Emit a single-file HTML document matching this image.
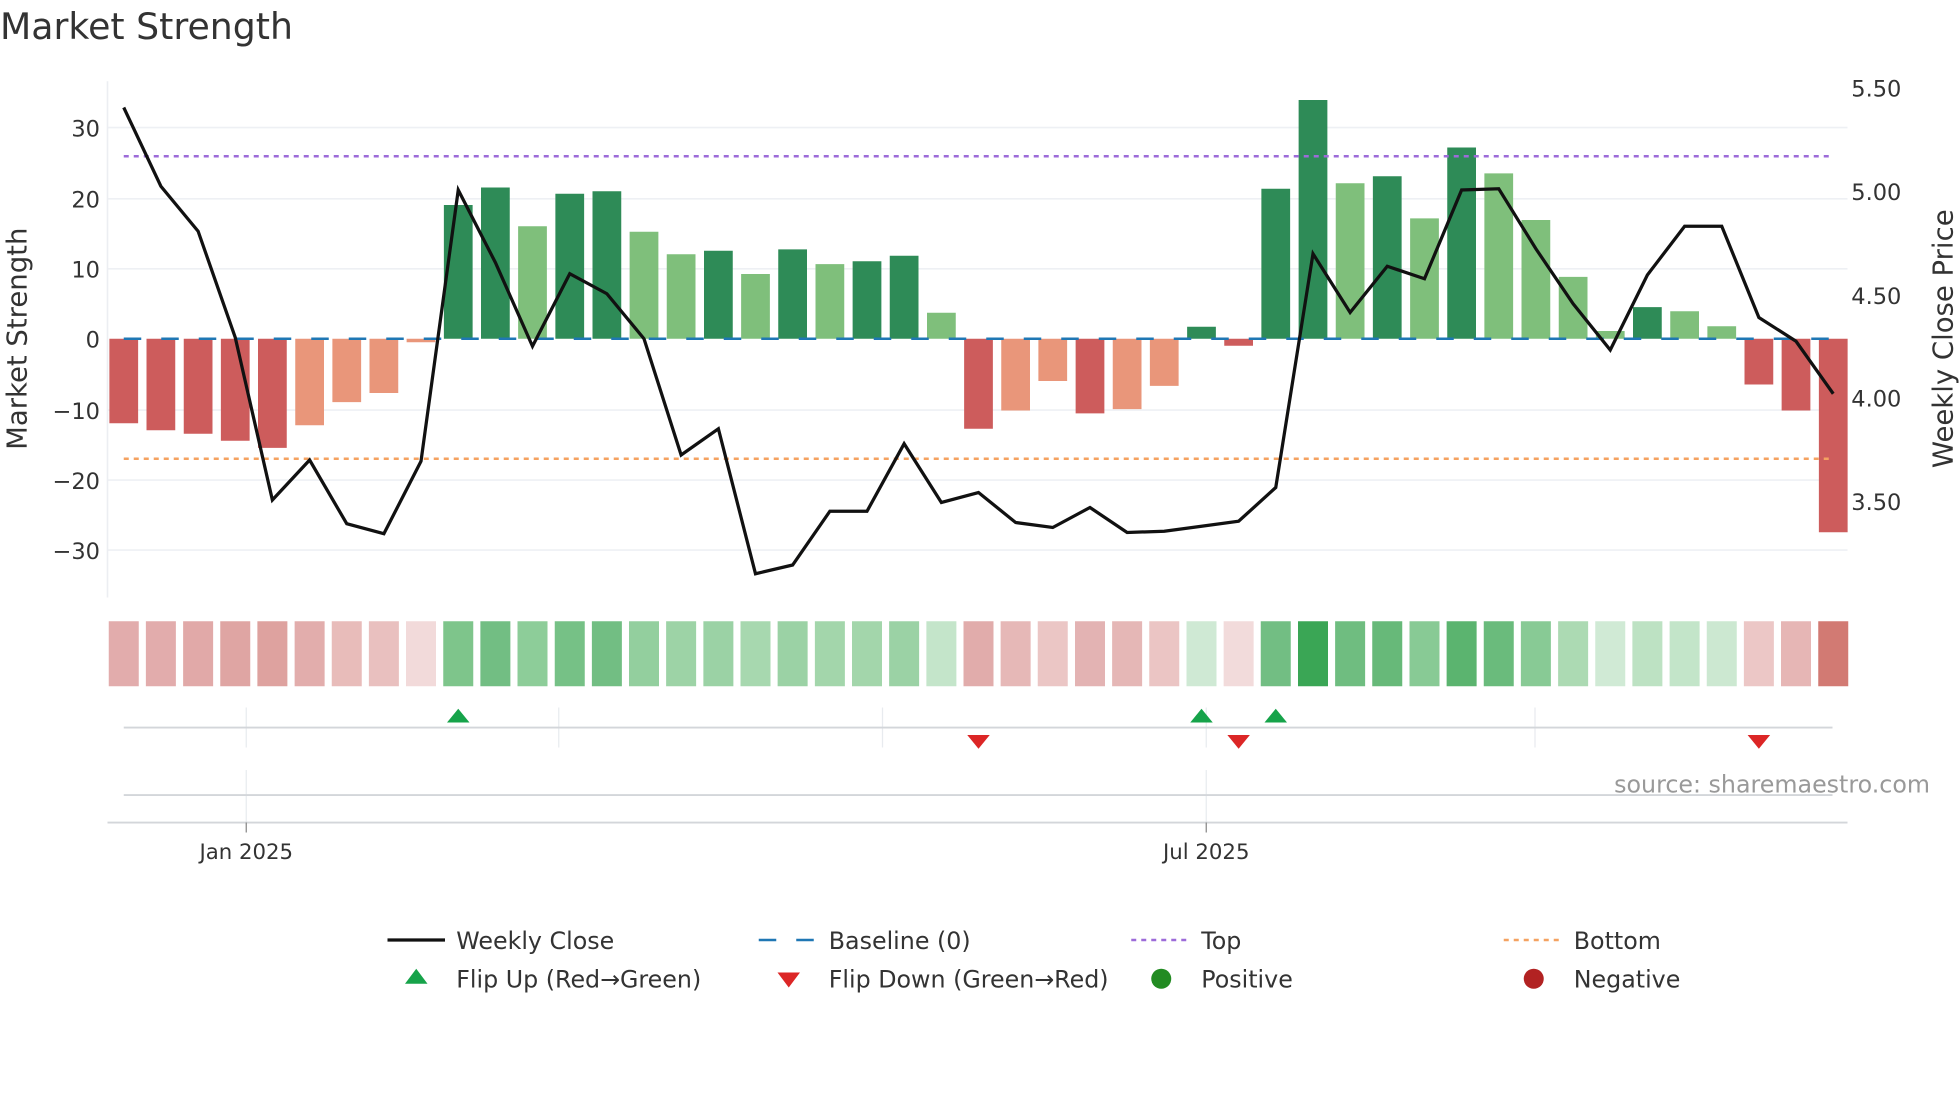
<!DOCTYPE html>
<html><head><meta charset="utf-8"><style>
html,body{margin:0;padding:0;background:#fff;}
svg{display:block;}
text{font-family:"DejaVu Sans","Liberation Sans",sans-serif;}
</style></head><body>
<svg width="1960" height="1102" viewBox="0 0 1568 881.6" xmlns="http://www.w3.org/2000/svg">
<rect width="1568" height="882" fill="#fff"/>
<text x="0" y="31" font-size="29" fill="#333">Market Strength</text>

<!-- grid -->
<g stroke="#eef0f4" stroke-width="1.3">
<line x1="86" x2="1478" y1="102" y2="102"/><line x1="86" x2="1478" y1="159" y2="159"/>
<line x1="86" x2="1478" y1="215" y2="215"/><line x1="86" x2="1478" y1="328" y2="328"/>
<line x1="86" x2="1478" y1="384" y2="384"/><line x1="86" x2="1478" y1="440" y2="440"/>
</g>
<line x1="86" x2="86" y1="65" y2="478" stroke="#eceef2" stroke-width="1.3"/>

<!-- left ticks -->
<g font-size="18" fill="#333" text-anchor="end">
<text x="80" y="109">30</text><text x="80" y="166">20</text><text x="80" y="222">10</text>
<text x="80" y="278">0</text><text x="80" y="335">−10</text><text x="80" y="391">−20</text><text x="80" y="447">−30</text>
</g>
<text transform="translate(21,271) rotate(-90)" font-size="22" fill="#333" text-anchor="middle">Market Strength</text>
<!-- right ticks -->
<g font-size="18" fill="#333">
<text x="1481" y="77">5.50</text><text x="1481" y="160">5.00</text><text x="1481" y="243">4.50</text>
<text x="1481" y="325">4.00</text><text x="1481" y="408">3.50</text>
</g>
<text transform="translate(1562,271) rotate(-90)" font-size="22" fill="#333" text-anchor="middle">Weekly Close Price</text>

<!-- bars -->
<g>
<rect x="87.5" y="271" width="23" height="67.6" fill="#cd5c5c"/>
<rect x="117.2" y="271" width="23" height="73.2" fill="#cd5c5c"/>
<rect x="147" y="271" width="23" height="76" fill="#cd5c5c"/>
<rect x="176.7" y="271" width="23" height="81.6" fill="#cd5c5c"/>
<rect x="206.4" y="271" width="23" height="87.3" fill="#cd5c5c"/>
<rect x="236.2" y="271" width="23" height="69.2" fill="#e9967a"/>
<rect x="265.9" y="271" width="23" height="50.7" fill="#e9967a"/>
<rect x="295.6" y="271" width="23" height="43.4" fill="#e9967a"/>
<rect x="325.3" y="271" width="23" height="2.8" fill="#e9967a"/>
<rect x="355.1" y="164" width="23" height="107" fill="#2e8b57"/>
<rect x="384.8" y="150" width="23" height="121" fill="#2e8b57"/>
<rect x="414.5" y="181" width="23" height="90" fill="#7fbf7b"/>
<rect x="444.3" y="155" width="23" height="116" fill="#2e8b57"/>
<rect x="474" y="153" width="23" height="118" fill="#2e8b57"/>
<rect x="503.7" y="185.4" width="23" height="85.6" fill="#7fbf7b"/>
<rect x="533.4" y="203.4" width="23" height="67.6" fill="#7fbf7b"/>
<rect x="563.2" y="200.6" width="23" height="70.4" fill="#2e8b57"/>
<rect x="592.9" y="219.2" width="23" height="51.8" fill="#7fbf7b"/>
<rect x="622.6" y="199.5" width="23" height="71.5" fill="#2e8b57"/>
<rect x="652.4" y="211.3" width="23" height="59.7" fill="#7fbf7b"/>
<rect x="682.1" y="209" width="23" height="62" fill="#2e8b57"/>
<rect x="711.8" y="204.6" width="23" height="66.4" fill="#2e8b57"/>
<rect x="741.6" y="250.2" width="23" height="20.8" fill="#7fbf7b"/>
<rect x="771.3" y="271" width="23" height="72" fill="#cd5c5c"/>
<rect x="801" y="271" width="23" height="57.4" fill="#e9967a"/>
<rect x="830.7" y="271" width="23" height="33.8" fill="#e9967a"/>
<rect x="860.5" y="271" width="23" height="59.7" fill="#cd5c5c"/>
<rect x="890.2" y="271" width="23" height="56.3" fill="#e9967a"/>
<rect x="919.9" y="271" width="23" height="37.7" fill="#e9967a"/>
<rect x="949.7" y="261.4" width="23" height="9.6" fill="#2e8b57"/>
<rect x="979.4" y="271" width="23" height="5.6" fill="#cd5c5c"/>
<rect x="1009.1" y="151" width="23" height="120" fill="#2e8b57"/>
<rect x="1038.9" y="80" width="23" height="191" fill="#2e8b57"/>
<rect x="1068.6" y="146.6" width="23" height="124.4" fill="#7fbf7b"/>
<rect x="1098.3" y="141" width="23" height="130" fill="#2e8b57"/>
<rect x="1128.1" y="174.7" width="23" height="96.3" fill="#7fbf7b"/>
<rect x="1157.8" y="118" width="23" height="153" fill="#2e8b57"/>
<rect x="1187.5" y="138.7" width="23" height="132.3" fill="#7fbf7b"/>
<rect x="1217.2" y="176" width="23" height="95" fill="#7fbf7b"/>
<rect x="1247" y="221.5" width="23" height="49.5" fill="#7fbf7b"/>
<rect x="1276.7" y="264.8" width="23" height="6.2" fill="#7fbf7b"/>
<rect x="1306.4" y="245.7" width="23" height="25.3" fill="#2e8b57"/>
<rect x="1336.2" y="249" width="23" height="22" fill="#7fbf7b"/>
<rect x="1365.9" y="261" width="23" height="10" fill="#7fbf7b"/>
<rect x="1395.6" y="271" width="23" height="36.6" fill="#cd5c5c"/>
<rect x="1425.3" y="271" width="23" height="57.4" fill="#cd5c5c"/>
<rect x="1455.1" y="271" width="23" height="154.8" fill="#cd5c5c"/>
</g>

<!-- reference lines -->
<line x1="99" x2="1466" y1="271" y2="271" stroke="#1f77b4" stroke-width="2" stroke-dasharray="14,16"/>
<line x1="99" x2="1466" y1="125" y2="125" stroke="#9d6bd9" stroke-width="2" stroke-dasharray="4,4"/>
<line x1="99" x2="1466" y1="367" y2="367" stroke="#f4a261" stroke-width="2" stroke-dasharray="4,4"/>

<!-- price line -->
<polyline fill="none" stroke="#111" stroke-width="2.6" stroke-linejoin="miter" points="99,86 128.7,149 158.5,185 188.2,270 217.9,400 247.7,368 277.4,419 307.1,427 336.8,369 366.6,152 396.3,210 426,277 455.8,219 485.5,235 515.2,271 544.9,364 574.7,343 604.4,459 634.1,452 663.9,409 693.6,409 723.3,355 753.1,402 782.8,394 812.5,418 842.2,422 872,406 901.7,426 931.4,425 961.2,421 990.9,417 1020.6,390 1050.4,203 1080.1,250 1109.8,213 1139.6,223 1169.3,152 1199,151 1228.7,199 1258.5,243 1288.2,280 1317.9,220 1347.7,181 1377.4,181 1407.1,254 1436.8,273 1466.6,315"/>

<!-- heat strip -->
<g>
<rect x="87" y="497" width="24" height="52" fill="#e2acac"/>
<rect x="116.7" y="497" width="24" height="52" fill="#e2acac"/>
<rect x="146.5" y="497" width="24" height="52" fill="#e1a9a8"/>
<rect x="176.2" y="497" width="24" height="52" fill="#dfa5a3"/>
<rect x="205.9" y="497" width="24" height="52" fill="#dea29f"/>
<rect x="235.7" y="497" width="24" height="52" fill="#e2adac"/>
<rect x="265.4" y="497" width="24" height="52" fill="#e8bcba"/>
<rect x="295.1" y="497" width="24" height="52" fill="#e9c0bf"/>
<rect x="324.8" y="497" width="24" height="52" fill="#f2dada"/>
<rect x="354.6" y="497" width="24" height="52" fill="#7ec58b"/>
<rect x="384.3" y="497" width="24" height="52" fill="#72be83"/>
<rect x="414" y="497" width="24" height="52" fill="#8dcd99"/>
<rect x="443.8" y="497" width="24" height="52" fill="#76c186"/>
<rect x="473.5" y="497" width="24" height="52" fill="#72be83"/>
<rect x="503.2" y="497" width="24" height="52" fill="#93cf9e"/>
<rect x="532.9" y="497" width="24" height="52" fill="#9dd3a6"/>
<rect x="562.7" y="497" width="24" height="52" fill="#9bd2a5"/>
<rect x="592.4" y="497" width="24" height="52" fill="#a7d8af"/>
<rect x="622.1" y="497" width="24" height="52" fill="#9bd2a5"/>
<rect x="651.9" y="497" width="24" height="52" fill="#a3d6ab"/>
<rect x="681.6" y="497" width="24" height="52" fill="#a3d6ab"/>
<rect x="711.3" y="497" width="24" height="52" fill="#9bd2a5"/>
<rect x="741.1" y="497" width="24" height="52" fill="#c4e5ca"/>
<rect x="770.8" y="497" width="24" height="52" fill="#e1acab"/>
<rect x="800.5" y="497" width="24" height="52" fill="#e6b8b7"/>
<rect x="830.2" y="497" width="24" height="52" fill="#ebc6c5"/>
<rect x="860" y="497" width="24" height="52" fill="#e3b3b3"/>
<rect x="889.7" y="497" width="24" height="52" fill="#e5b7b6"/>
<rect x="919.4" y="497" width="24" height="52" fill="#ebc5c4"/>
<rect x="949.2" y="497" width="24" height="52" fill="#cfe9d4"/>
<rect x="978.9" y="497" width="24" height="52" fill="#f2dbdb"/>
<rect x="1008.6" y="497" width="24" height="52" fill="#72be83"/>
<rect x="1038.4" y="497" width="24" height="52" fill="#3aa655"/>
<rect x="1068.1" y="497" width="24" height="52" fill="#6fbd80"/>
<rect x="1097.8" y="497" width="24" height="52" fill="#67b979"/>
<rect x="1127.6" y="497" width="24" height="52" fill="#88ca95"/>
<rect x="1157.3" y="497" width="24" height="52" fill="#5bb46f"/>
<rect x="1187" y="497" width="24" height="52" fill="#6abb7c"/>
<rect x="1216.7" y="497" width="24" height="52" fill="#88ca95"/>
<rect x="1246.5" y="497" width="24" height="52" fill="#acdab3"/>
<rect x="1276.2" y="497" width="24" height="52" fill="#d0ead5"/>
<rect x="1305.9" y="497" width="24" height="52" fill="#bde2c3"/>
<rect x="1335.7" y="497" width="24" height="52" fill="#c3e5c9"/>
<rect x="1365.4" y="497" width="24" height="52" fill="#cce8d1"/>
<rect x="1395.1" y="497" width="24" height="52" fill="#ecc7c6"/>
<rect x="1424.8" y="497" width="24" height="52" fill="#e6b6b5"/>
<rect x="1454.6" y="497" width="24" height="52" fill="#d27a73"/>
</g>

<!-- flip lane -->
<g stroke="#e8ebef" stroke-width="1">
<line x1="197" x2="197" y1="566" y2="598"/><line x1="447" x2="447" y1="566" y2="598"/>
<line x1="706" x2="706" y1="566" y2="598"/><line x1="965" x2="965" y1="566" y2="598"/>
<line x1="1228" x2="1228" y1="566" y2="598"/>
<line x1="197" x2="197" y1="616" y2="660"/><line x1="965" x2="965" y1="616" y2="660"/>
</g>
<line x1="99" x2="1466" y1="582" y2="582" stroke="#d3d6da" stroke-width="1.5"/>
<line x1="99" x2="1466" y1="636" y2="636" stroke="#d3d6da" stroke-width="1.5"/>
<line x1="86" x2="1478" y1="658" y2="658" stroke="#d3d6da" stroke-width="1.5"/>
<g fill="#16a34a">
<polygon points="366.6,567 357.6,578 375.6,578"/>
<polygon points="961.2,567 952.2,578 970.2,578"/>
<polygon points="1020.6,567 1011.6,578 1029.6,578"/>
</g>
<g fill="#dc2626">
<polygon points="773.8,588 791.8,588 782.8,599"/>
<polygon points="981.9,588 999.9,588 990.9,599"/>
<polygon points="1398.1,588 1416.1,588 1407.1,599"/>
</g>
<line x1="197" x2="197" y1="658" y2="666" stroke="#888" stroke-width="1"/>
<line x1="965" x2="965" y1="658" y2="666" stroke="#888" stroke-width="1"/>
<text x="1544" y="634" font-size="19" fill="#999" text-anchor="end">source: sharemaestro.com</text>
<g font-size="17" fill="#333" text-anchor="middle">
<text x="197" y="687">Jan 2025</text><text x="965" y="687">Jul 2025</text>
</g>

<!-- legend -->
<g font-size="19" fill="#333">
<line x1="310" x2="356" y1="752" y2="752" stroke="#111" stroke-width="2.6"/>
<text x="365" y="759">Weekly Close</text>
<line x1="607" x2="651" y1="752" y2="752" stroke="#1f77b4" stroke-width="2" stroke-dasharray="14,16"/>
<text x="663" y="759">Baseline (0)</text>
<line x1="905" x2="949" y1="752" y2="752" stroke="#9d6bd9" stroke-width="2" stroke-dasharray="4,4"/>
<text x="961" y="759">Top</text>
<line x1="1203" x2="1247" y1="752" y2="752" stroke="#f4a261" stroke-width="2" stroke-dasharray="4,4"/>
<text x="1259" y="759">Bottom</text>
<polygon points="333,775 324,787 342,787" fill="#16a34a"/>
<text x="365" y="790">Flip Up (Red→Green)</text>
<polygon points="622,778 640,778 631,790" fill="#dc2626"/>
<text x="663" y="790">Flip Down (Green→Red)</text>
<circle cx="929" cy="783" r="8" fill="#228b22"/>
<text x="961" y="790">Positive</text>
<circle cx="1227" cy="783" r="8" fill="#b22222"/>
<text x="1259" y="790">Negative</text>
</g>
</svg>
</body></html>
